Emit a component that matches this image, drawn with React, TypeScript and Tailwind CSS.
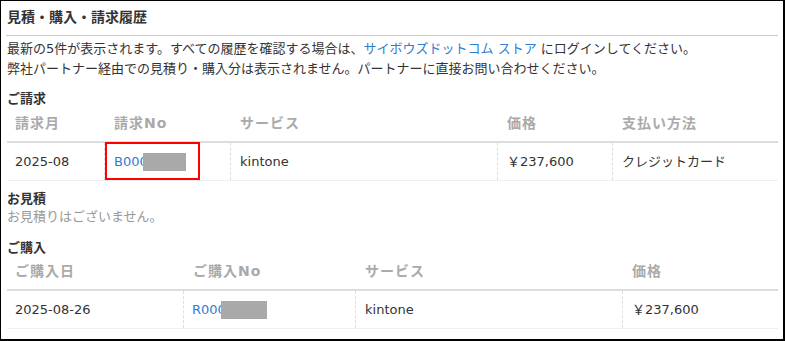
import React from "react";

function HeaderCell({ children, first }: { children: React.ReactNode; first?: boolean }) {
  return (
    <div
      className={`flex h-[32px] items-center pb-[3px] text-[14px] font-bold tracking-[1px] text-[#aaaaaa] ${
        first ? "pl-[8px]" : "pl-[10px]"
      }`}
    >
      {children}
    </div>
  );
}

function DataCell({
  children,
  first,
  relative,
}: {
  children: React.ReactNode;
  first?: boolean;
  relative?: boolean;
}) {
  return (
    <div
      className={`flex h-[37px] items-center whitespace-nowrap text-[13px] text-[#333333] ${
        first ? "pl-[8px]" : "border-l border-dashed border-[#dddddd] pl-[9px]"
      } ${relative ? "relative" : ""}`}
    >
      {children}
    </div>
  );
}

function Redacted({ w }: { w: string }) {
  return <span className={`ml-[-5px] inline-block h-[18px] bg-[#a9a9a9] ${w}`} />;
}

export default function App() {
  return (
    <div className="box-border h-[341px] w-[785px] overflow-hidden border-t border-l border-r-2 border-b-2 border-black bg-white font-['DejaVu_Sans','Noto_Sans_CJK_JP',sans-serif] text-[#333333]">
      <div className="mx-[5px] flex h-[35px] items-center border-b border-[#cccccc] pb-[2px] pl-[1px] text-[14px] font-bold leading-[20px] text-[#333333]">
        見積・購入・請求履歴
      </div>
      <div className="px-[5px]">
        <div className="mt-[3px] pl-[1px] text-[13px] leading-[20px]">
          <div>
            最新の5件が表示されます。すべての履歴を確認する場合は、
            <span className="text-[#2e7dd1]">サイボウズドットコム ストア</span> にログインしてください。
          </div>
          <div>弊社パートナー経由での見積り・購入分は表示されません。パートナーに直接お問い合わせください。</div>
        </div>

        <div className="mt-[10px] pl-[1px] text-[13px] font-bold leading-[20px]">ご請求</div>
        <div className="ml-[1px] w-[771px]">
          <div className="grid grid-cols-[97px_126px_267px_115px_166px] border-b-2 border-[#dddddd]">
            <HeaderCell first>請求月</HeaderCell>
            <HeaderCell>請求No</HeaderCell>
            <HeaderCell>サービス</HeaderCell>
            <HeaderCell>価格</HeaderCell>
            <HeaderCell>支払い方法</HeaderCell>
          </div>
          <div className="grid grid-cols-[97px_126px_267px_115px_166px] border-b border-[#eeeeee]">
            <DataCell first>2025-08</DataCell>
            <DataCell relative>
              <span className="text-[#2e7dd1]">B000</span>
              <Redacted w="w-[43px]" />
              <span className="absolute left-0 top-[-1px] h-[38px] w-[95px] border-[2.5px] border-[#ff0000]" />
            </DataCell>
            <DataCell>kintone</DataCell>
            <DataCell>￥237,600</DataCell>
            <DataCell>クレジットカード</DataCell>
          </div>
        </div>

        <div className="mt-[9px] pl-[1px] text-[13px] font-bold leading-[18px]">お見積</div>
        <div className="pl-[1px] text-[13px] leading-[18px] text-[#999999]">お見積りはございません。</div>

        <div className="mt-[13px] pl-[1px] text-[13px] font-bold leading-[18px]">ご購入</div>
        <div className="ml-[1px] w-[771px]">
          <div className="grid grid-cols-[176px_172px_267px_156px] border-b-2 border-[#dddddd]">
            <HeaderCell first>ご購入日</HeaderCell>
            <HeaderCell>ご購入No</HeaderCell>
            <HeaderCell>サービス</HeaderCell>
            <HeaderCell>価格</HeaderCell>
          </div>
          <div className="grid grid-cols-[176px_172px_267px_156px] border-b border-[#eeeeee]">
            <DataCell first>2025-08-26</DataCell>
            <DataCell>
              <span className="ml-[-1px] text-[#2e7dd1]">R000</span>
              <Redacted w="w-[46px]" />
            </DataCell>
            <DataCell>kintone</DataCell>
            <DataCell>￥237,600</DataCell>
          </div>
        </div>
      </div>
    </div>
  );
}
